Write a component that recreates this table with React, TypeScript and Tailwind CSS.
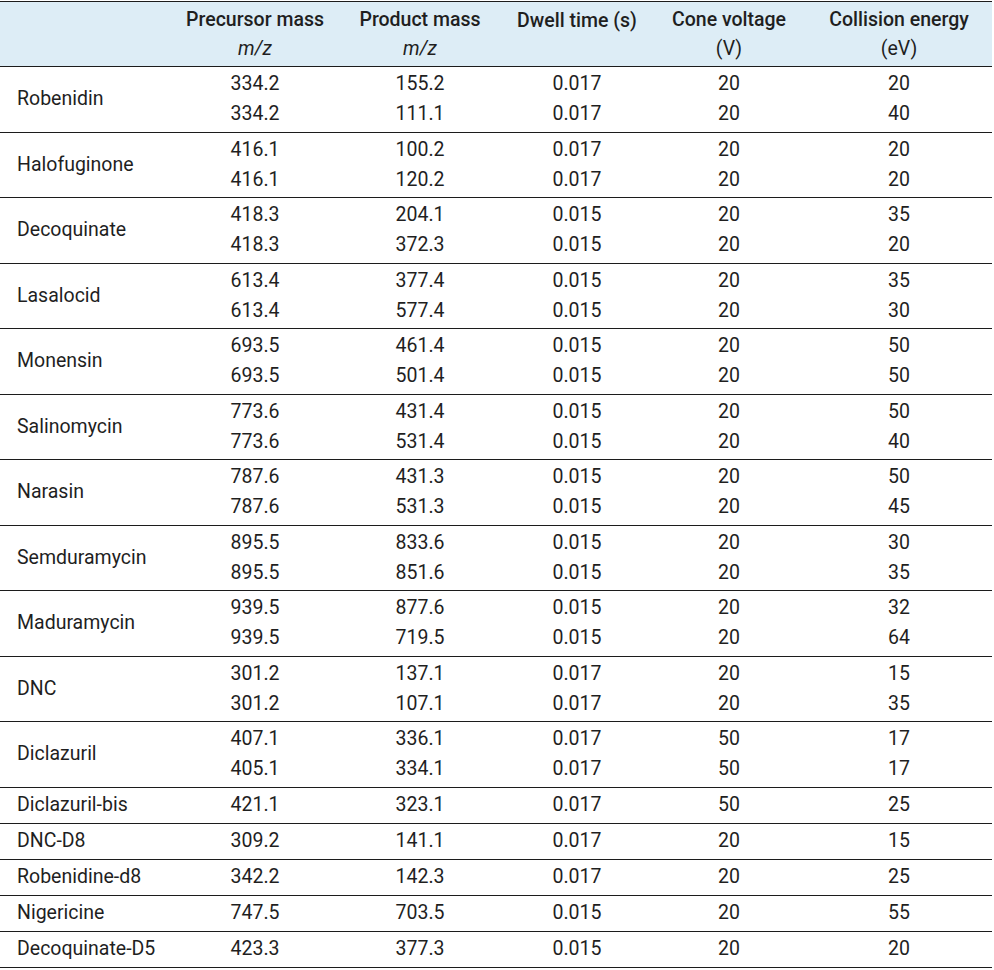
import React from "react";

type Row = { name: string; vals: string[][] };

const rows: Row[] = [
  { name: "Robenidin", vals: [["334.2", "155.2", "0.017", "20", "20"], ["334.2", "111.1", "0.017", "20", "40"]] },
  { name: "Halofuginone", vals: [["416.1", "100.2", "0.017", "20", "20"], ["416.1", "120.2", "0.017", "20", "20"]] },
  { name: "Decoquinate", vals: [["418.3", "204.1", "0.015", "20", "35"], ["418.3", "372.3", "0.015", "20", "20"]] },
  { name: "Lasalocid", vals: [["613.4", "377.4", "0.015", "20", "35"], ["613.4", "577.4", "0.015", "20", "30"]] },
  { name: "Monensin", vals: [["693.5", "461.4", "0.015", "20", "50"], ["693.5", "501.4", "0.015", "20", "50"]] },
  { name: "Salinomycin", vals: [["773.6", "431.4", "0.015", "20", "50"], ["773.6", "531.4", "0.015", "20", "40"]] },
  { name: "Narasin", vals: [["787.6", "431.3", "0.015", "20", "50"], ["787.6", "531.3", "0.015", "20", "45"]] },
  { name: "Semduramycin", vals: [["895.5", "833.6", "0.015", "20", "30"], ["895.5", "851.6", "0.015", "20", "35"]] },
  { name: "Maduramycin", vals: [["939.5", "877.6", "0.015", "20", "32"], ["939.5", "719.5", "0.015", "20", "64"]] },
  { name: "DNC", vals: [["301.2", "137.1", "0.017", "20", "15"], ["301.2", "107.1", "0.017", "20", "35"]] },
  { name: "Diclazuril", vals: [["407.1", "336.1", "0.017", "50", "17"], ["405.1", "334.1", "0.017", "50", "17"]] },
  { name: "Diclazuril-bis", vals: [["421.1", "323.1", "0.017", "50", "25"]] },
  { name: "DNC-D8", vals: [["309.2", "141.1", "0.017", "20", "15"]] },
  { name: "Robenidine-d8", vals: [["342.2", "142.3", "0.017", "20", "25"]] },
  { name: "Nigericine", vals: [["747.5", "703.5", "0.015", "20", "55"]] },
  { name: "Decoquinate-D5", vals: [["423.3", "377.3", "0.015", "20", "20"]] },
];

const grid = "grid grid-cols-[172px_166px_164px_150px_154px_186px]";

export default function App() {
  return (
    <div className="bg-white w-[994px] min-h-[970px] pt-px" style={{ fontFamily: "Roboto, 'Liberation Sans', sans-serif" }}>
      <div className="w-[992px] border-t border-[#1c1c1c] text-[#1f1f1f] text-[19.5px]">
        <div className={`${grid} h-[65px] bg-[#ddedf6] border-b border-[#1c1c1c] font-medium items-center`}>
          <div />
          <div className="text-center leading-[29px]">
            <div>Precursor mass</div>
            <div className="italic font-normal">m/z</div>
          </div>
          <div className="text-center leading-[29px]">
            <div>Product mass</div>
            <div className="italic font-normal">m/z</div>
          </div>
          <div className="text-center leading-[29px] self-start pt-[4px]">
            <div>Dwell time (s)</div>
          </div>
          <div className="text-center leading-[29px]">
            <div>Cone voltage</div>
            <div className="font-normal">(V)</div>
          </div>
          <div className="text-center leading-[29px]">
            <div>Collision energy</div>
            <div className="font-normal">(eV)</div>
          </div>
        </div>
        {rows.map((r) => {
          const dbl = r.vals.length === 2;
          return (
            <div
              key={r.name}
              className={`${grid} ${dbl ? "h-[65.5px]" : "h-[36px]"} border-b border-[#1c1c1c] items-center`}
            >
              <div className="pl-[17px] leading-[30px]">{r.name}</div>
              {[0, 1, 2, 3, 4].map((c) => (
                <div key={c} className="text-center leading-[30px]">
                  {r.vals.map((v, i) => (
                    <div key={i}>{v[c]}</div>
                  ))}
                </div>
              ))}
            </div>
          );
        })}
      </div>
    </div>
  );
}
